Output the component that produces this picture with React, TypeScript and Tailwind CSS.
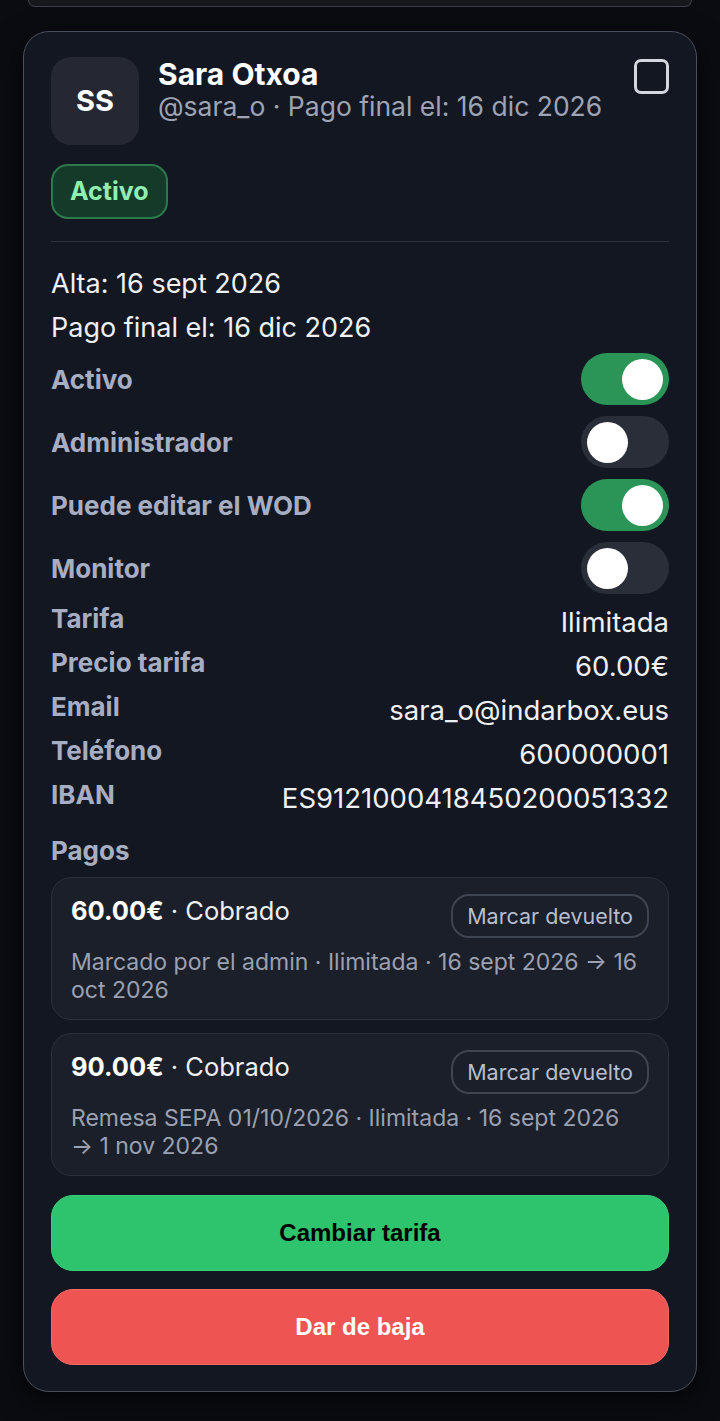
import React from "react";

const Toggle = ({ on }: { on: boolean }) => (
  <div
    className={`flex h-[52px] w-[88px] shrink-0 items-center rounded-full px-[6px] ${
      on ? "justify-end bg-[#2a9556]" : "justify-start bg-[#2a2e38]"
    }`}
  >
    <div className="h-[41px] w-[41px] rounded-full bg-white" />
  </div>
);

const pagos = [
  {
    importe: "60.00€",
    detalle: "Marcado por el admin · Ilimitada · 16 sept 2026 → 16 oct 2026",
  },
  {
    importe: "90.00€",
    detalle: "Remesa SEPA 01/10/2026 · Ilimitada · 16 sept 2026 → 1 nov 2026",
  },
];

const App = () => {
  const toggles = [
    { label: "Activo", on: true },
    { label: "Administrador", on: false },
    { label: "Puede editar el WOD", on: true },
    { label: "Monitor", on: false },
  ];

  const info = [
    { label: "Tarifa", value: "Ilimitada" },
    { label: "Precio tarifa", value: "60.00€" },
    { label: "Email", value: "sara_o@indarbox.eus" },
    { label: "Teléfono", value: "600000001" },
    { label: "IBAN", value: "ES9121000418450200051332" },
  ];

  return (
    <div className="min-h-[1421px] bg-[#0a0c11] font-['Inter',sans-serif] text-[#e8eaf0]">
      {/* bottom of the previous card */}
      <div className="mx-[28px] h-[7px] rounded-b-[22px] border-x border-b border-[#3a3e48] bg-[#16181e]" />

      <div className="mx-[23px] mt-[24px] rounded-[26px] border border-[#4a4f5c] bg-[#131722] px-[27px] pb-[26px] pt-[25px] shadow-[0_10px_30px_rgba(0,0,0,0.6)]">
        <div className="flex items-start">
          <div className="flex h-[88px] w-[88px] shrink-0 items-center justify-center rounded-[20px] bg-[#252833] text-[29px] font-bold text-white">
            SS
          </div>
          <div className="ml-[19px] flex-1 pt-[1px]">
            <div className="text-[30px] font-bold leading-[32px] text-white">
              Sara Otxoa
            </div>
            <div className="text-[26.5px] leading-[32px] text-[#9ea4b3]">
              @sara_o · Pago final el: 16 dic 2026
            </div>
          </div>
          <div className="mt-[2px] h-[35px] w-[35px] shrink-0 rounded-[7px] border-[3px] border-[#d4d7de]" />
        </div>

        <div className="mt-[19px] inline-flex h-[55px] items-center rounded-[17px] border-2 border-[#2b7a4b] bg-[#163a2a] px-[17px] text-[25px] font-bold text-[#8ef0b0]">
          Activo
        </div>

        <div className="mt-[22px] h-px bg-[#2d3240]" />

        <div className="mt-[25px] text-[27px] leading-[34px] text-[#eef0f4]">
          Alta: 16 sept 2026
        </div>
        <div className="mt-[10px] text-[27px] leading-[34px] text-[#eef0f4]">
          Pago final el: 16 dic 2026
        </div>

        <div className="mt-[8px] flex flex-col gap-[11px]">
          {toggles.map((t) => (
            <div key={t.label} className="flex items-center justify-between">
              <span className="text-[26px] font-bold text-[#a8aec2]">
                {t.label}
              </span>
              <Toggle on={t.on} />
            </div>
          ))}
        </div>

        <div className="mt-[10px] flex flex-col gap-[10px]">
          {info.map((r) => (
            <div key={r.label} className="flex items-start justify-between">
              <span className="text-[26px] font-bold leading-[30px] text-[#a8aec2]">
                {r.label}
              </span>
              <span className="pt-[3px] text-[27.5px] leading-[31px] text-[#eef0f4]">
                {r.value}
              </span>
            </div>
          ))}
        </div>

        <div className="mt-[22px] text-[26px] font-bold leading-[30px] text-[#a8aec2]">
          Pagos
        </div>

        <div className="mt-[11px] flex flex-col gap-[13px]">
          {pagos.map((p) => (
            <div
              key={p.importe}
              className="rounded-[20px] border border-[#2b303c] bg-[#1b1f2a] px-[19px] pb-[15px] pt-[16px]"
            >
              <div className="flex items-start justify-between">
                <div className="pt-[1px] text-[25.5px] leading-[32px] text-[#eef0f4]">
                  <span className="font-bold text-white">{p.importe}</span> ·
                  Cobrado
                </div>
                <button className="h-[44px] rounded-[18px] border-2 border-[#3f4451] px-[14px] text-[21.5px] text-[#b7bdcc]">
                  Marcar devuelto
                </button>
              </div>
              <div className="mt-[10px] pr-[8px] text-[23px] leading-[28px] text-[#9ba1b1]">
                {p.detalle}
              </div>
            </div>
          ))}
        </div>

        <button className="mt-[19px] flex h-[76px] w-full items-center justify-center rounded-[22px] border border-[#3ad07a] bg-[#2ec46e] font-['Liberation_Sans',sans-serif] text-[24px] font-bold text-black">
          Cambiar tarifa
        </button>
        <button className="mt-[18px] flex h-[76px] w-full items-center justify-center rounded-[22px] border border-[#f46b68] bg-[#ee5552] font-['Liberation_Sans',sans-serif] text-[24px] font-bold text-white">
          Dar de baja
        </button>
      </div>
    </div>
  );
};

export default App;
